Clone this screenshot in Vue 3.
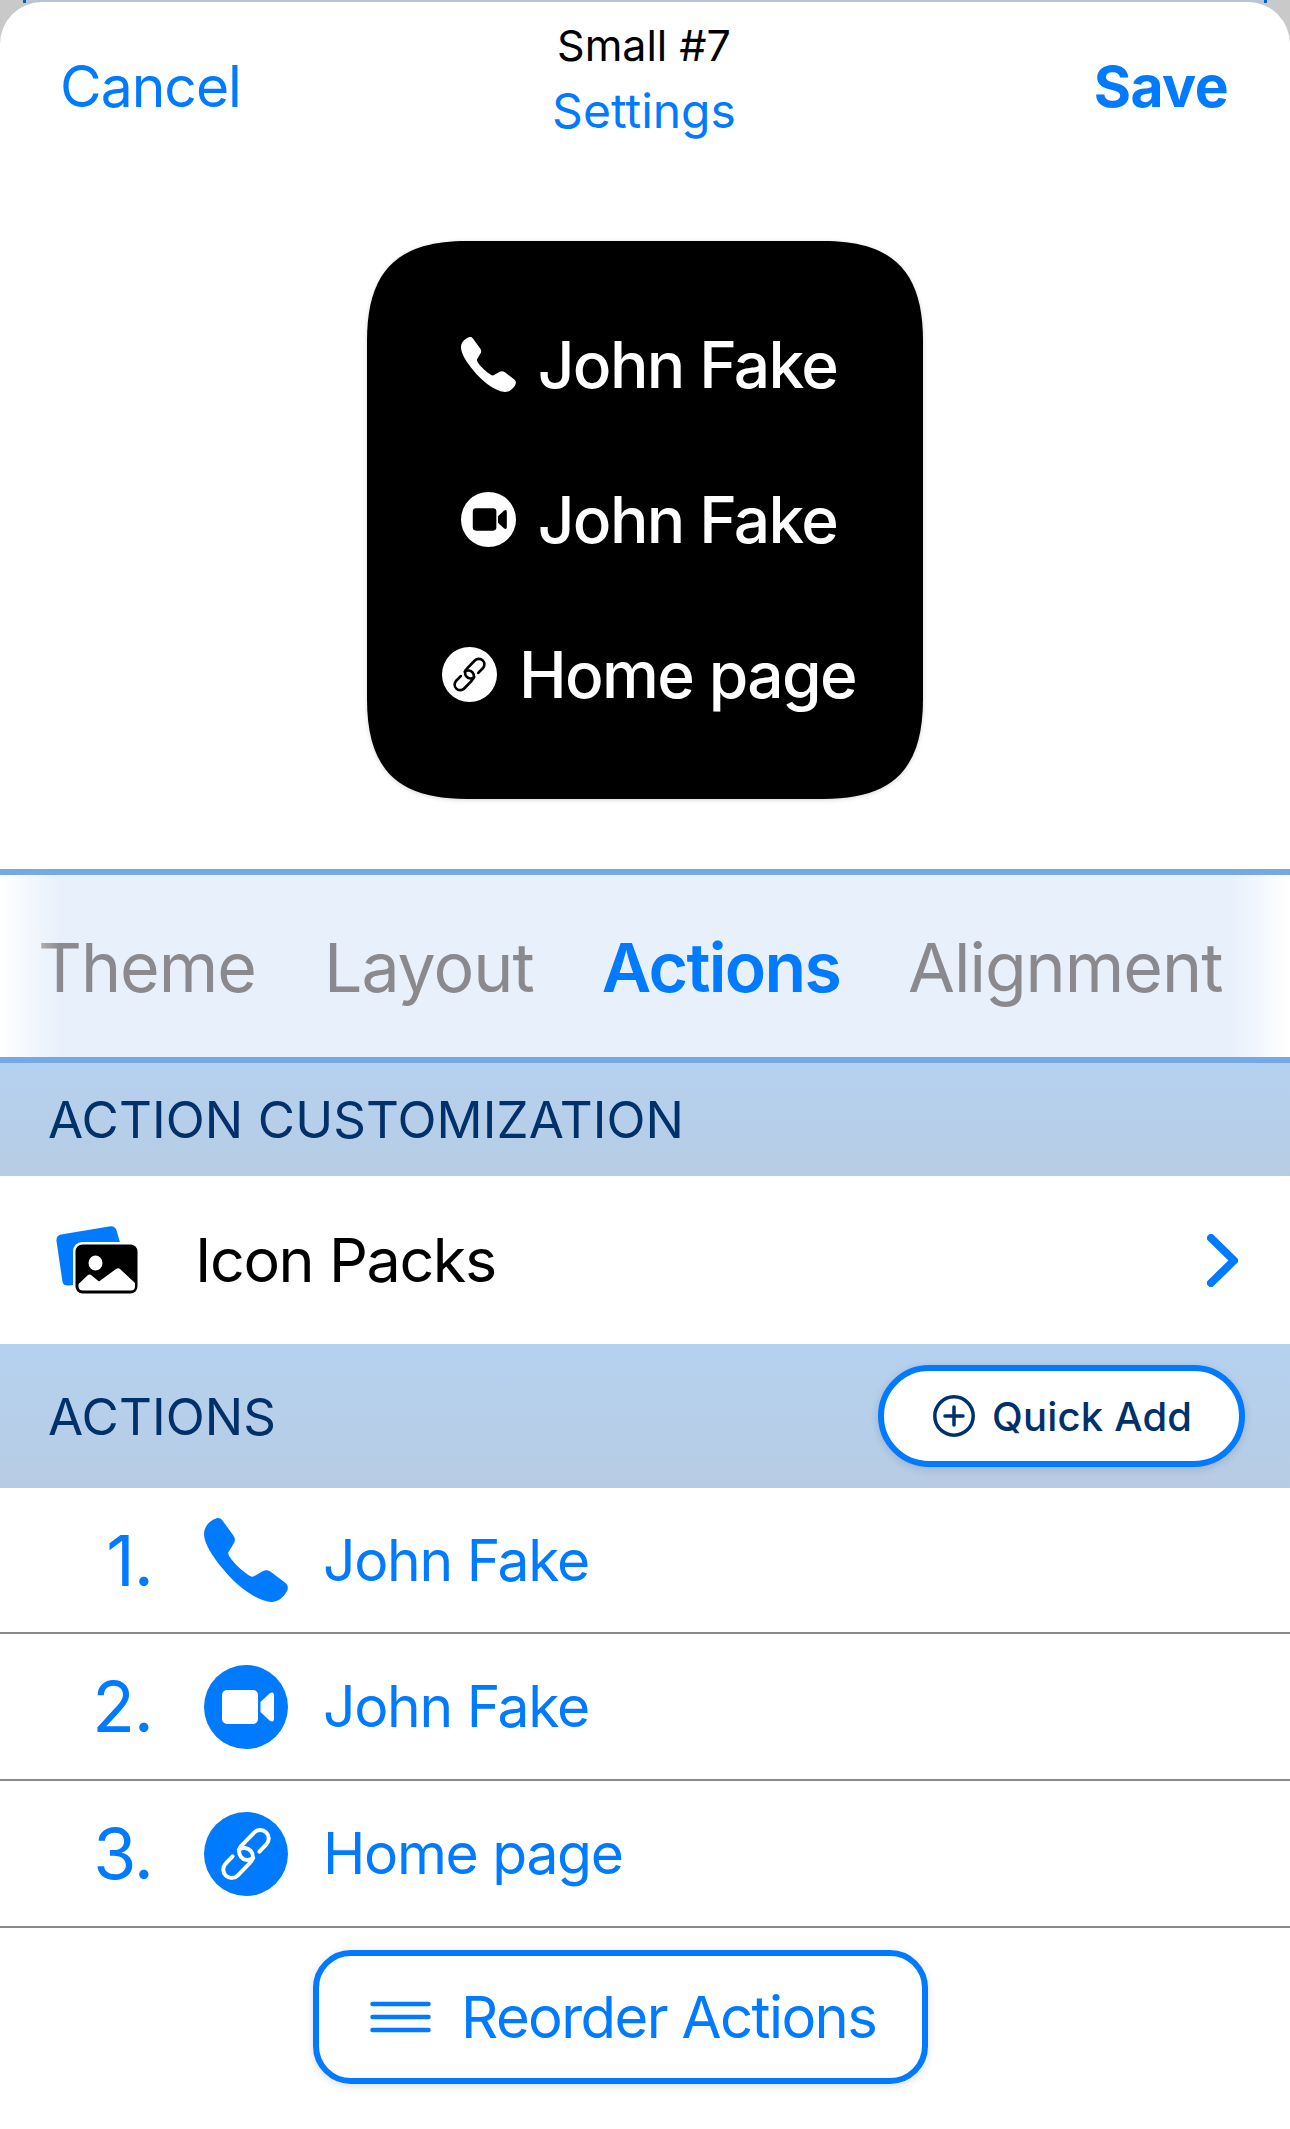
<script setup>
import { h } from 'vue';

const PHONE = 'M12 .5C15-.5 17 .5 18.5 2.5L29 17C31 19.5 31.5 22 30 25L24.5 34C24 35.5 24.5 37 25.5 38.5C30 45.5 38 53 46 58C47.5 59 49 59 50.5 58L59 53C61.5 51.5 64.5 52 67 54L81.5 65C84 67 84.5 70 83 73C79 80 74 84 67 84C50 82 31 66 19 51C8 38 0 25 0 16C0 9 5 3 12 .5Z';

// same glyphs are used in the widget preview and the list below
const ActionIcon = (props) => {
    const inner = props.inner;
    let parts;
    if (props.kind === 'phone') {
        parts = [h('path', { d: PHONE, fill: 'currentColor' })];
    } else if (props.kind === 'video') {
        parts = [
            h('circle', { cx: 42, cy: 42, r: 42, fill: 'currentColor' }),
            h('rect', { x: 18, y: 25, width: 36, height: 34, rx: 5, fill: inner }),
            h('path', { d: 'M56.5 37L65.5 28.5Q70 25.5 70 31V53Q70 58.500 65.500 55.500L56.500 47Z', fill: inner }),
        ];
    } else {
        parts = [
            h('circle', { cx: 42, cy: 42, r: 42, fill: 'currentColor' }),
            h('g', { transform: 'rotate(-46 42 42)', fill: 'none', stroke: inner, 'stroke-width': 4, 'stroke-linecap': 'round' }, [
                h('path', { d: 'M31 34H21A8.500 8.500 0 0 0 21 51H38A8.500 8.500 0 0 0 40 34' }),
                h('path', { d: 'M53 50H63A8.500 8.500 0 0 0 63 33H46A8.500 8.500 0 0 0 44 50' }),
            ]),
        ];
    }
    return h('svg', { viewBox: '0 0 84 84', width: props.size, height: props.size }, parts);
};
ActionIcon.props = ['kind', 'inner', 'size'];

const tabs = [
    { label: 'Theme' },
    { label: 'Layout' },
    { label: 'Actions', active: true },
    { label: 'Alignment' },
];

const actions = [
    { kind: 'phone', label: 'John Fake' },
    { kind: 'video', label: 'John Fake' },
    { kind: 'link', label: 'Home page' },
];
</script>

<template>
    <div class="screen">
        <div class="sheet">
            <header class="nav">
                <span class="nav-btn">Cancel</span>
                <div class="nav-title">
                    <span class="title-top">Small #7</span>
                    <span class="title-sub">Settings</span>
                </div>
                <span class="nav-btn save">Save</span>
            </header>

            <div class="preview">
                <div class="widget">
                    <div v-for="(action, i) in actions" :key="i" class="widget-row">
                        <ActionIcon :kind="action.kind" inner="#000" :size="55" />
                        <span>{{ action.label }}</span>
                    </div>
                </div>
            </div>

            <nav class="tabs">
                <span v-for="tab in tabs" :key="tab.label" class="tab" :class="{ active: tab.active }">{{ tab.label }}</span>
            </nav>

            <div class="section-head first">ACTION CUSTOMIZATION</div>
            <div class="pack-row">
                <svg class="pack-icon" viewBox="0 0 82 68" width="82" height="68">
                    <path d="M5 8.500L53 .5Q60-.5 61 6L65 20L20 58Q8 62 6.500 56L.5 15Q0 9.500 5 8.500Z" fill="#007aff" />
                    <rect x="17" y="16" width="65" height="52" rx="9" fill="#fff" />
                    <rect x="19.500" y="18.500" width="62" height="49" rx="7" fill="#000" />
                    <ellipse cx="39.500" cy="37" rx="7" ry="7.500" fill="#fff" />
                    <path d="M22.500 58L32 49Q33.500 48 35 49L43 55.500L60 43Q62 41.500 64 43L79 57V60Q79 64.500 75 64.500H27Q22.500 64.500 22.500 60Z" fill="#fff" />
                </svg>
                <span class="pack-label">Icon Packs</span>
                <svg class="chevron" viewBox="0 0 31 53" width="31" height="53" fill="none" stroke="#007aff" stroke-width="8" stroke-linecap="round" stroke-linejoin="round">
                    <path d="M4 4L27 26.500L4 49" />
                </svg>
            </div>

            <div class="section-head with-btn">
                <span>ACTIONS</span>
                <button class="quick-add">
                    <svg viewBox="0 0 42 42" width="42" height="42" fill="none" stroke="#00316b" stroke-width="3.500" stroke-linecap="round">
                        <circle cx="21" cy="21" r="19.200" />
                        <path d="M21 12V30M12 21H30" />
                    </svg>
                    Quick Add
                </button>
            </div>

            <div v-for="(action, i) in actions" :key="'row' + i" class="action-row">
                <span class="num">{{ i + 1 }}.</span>
                <ActionIcon :kind="action.kind" inner="#fff" :size="84" />
                <span class="action-label">{{ action.label }}</span>
            </div>

            <div class="footer">
                <button class="reorder">
                    <svg viewBox="0 0 61 32" width="61" height="32" stroke="#007aff" stroke-width="4.500" stroke-linecap="round">
                        <path d="M2.500 3H58.500M2.500 16H58.500M2.500 29H58.500" />
                    </svg>
                    Reorder Actions
                </button>
            </div>
        </div>
    </div>
</template>

<style>
body {
    margin: 0;
    background: #fff;
}
</style>

<style scoped>
.screen {
    width: 1290px;
    height: 2129px;
    padding-top: 2px;
    box-sizing: border-box;
    overflow: hidden;
    font-family: Inter, "Liberation Sans", sans-serif;
    background:
        linear-gradient(90deg, #c9c9c9 23px, #0a5ec2 23px, #0a5ec2 26px, #b9c5d3 26px, #b9c5d3 1264px, #0a5ec2 1264px, #0a5ec2 1267px, #c9c9c9 1267px) top / 100% 3px no-repeat,
        #c9c9c9;
}
.sheet {
    height: 2127px;
    background: #fff;
    border-radius: 42px 42px 0 0;
}
.nav {
    height: 148px;
    padding: 0 62px 0 60px;
    display: flex;
    justify-content: space-between;
    align-items: flex-start;
    position: relative;
}
.nav-btn {
    margin-top: 52px;
    font-size: 57px;
    line-height: 66px;
    letter-spacing: -1px;
    color: #007aff;
}
.save {
    font-weight: 700;
    letter-spacing: -0.6px;
}
.nav-title {
    position: absolute;
    left: 0;
    right: 0;
    top: 16px;
    display: flex;
    flex-direction: column;
    align-items: center;
}
.title-top {
    margin-right: 2px;
    font-size: 43px;
    line-height: 54px;
    color: #000;
}
.title-sub {
    margin-top: 10px;
    margin-right: 2px;
    font-size: 48px;
    line-height: 58px;
    color: #007aff;
}
.preview {
    height: 719px;
    padding-top: 91px;
    box-sizing: border-box;
    display: flex;
    justify-content: center;
    filter: drop-shadow(0 1px 2px rgba(0, 0, 0, 0.16));
}
.widget {
    width: 556px;
    height: 558px;
    padding-left: 8px;
    padding-bottom: 2px;
    box-sizing: border-box;
    background: #000;
    clip-path: path("M0 100C0 30 30 0 100 0H456C526 0 556 30 556 100V458C556 528 526 558 456 558H100C30 558 0 528 0 458Z");
    display: flex;
    flex-direction: column;
    align-items: center;
    justify-content: center;
    gap: 100px;
}
.widget-row {
    display: flex;
    align-items: center;
    gap: 22px;
    height: 55px;
    font-size: 64px;
    font-weight: 500;
    letter-spacing: -1.6px;
    color: #fff;
}
.tabs {
    height: 194px;
    box-sizing: border-box;
    padding: 2px 0 0 38px;
    display: flex;
    align-items: center;
    gap: 68px;
    border-top: 6px solid #74a9e6;
    border-bottom: 6px solid #74a9e6;
    background: #e8f0fb;
    position: relative;
}
.tabs::before,
.tabs::after {
    content: "";
    position: absolute;
    top: 0;
    bottom: 0;
    width: 60px;
}
.tabs::before {
    left: 0;
    background: linear-gradient(90deg, #fff, rgba(255, 255, 255, 0));
}
.tabs::after {
    right: 0;
    background: linear-gradient(270deg, #fff, rgba(255, 255, 255, 0));
}
.tab {
    font-size: 68px;
    letter-spacing: -1px;
    font-weight: 400;
    color: #8a8a8e;
}
.tab.active {
    font-weight: 600;
    letter-spacing: -1.7px;
    color: #007aff;
}
.section-head {
    padding-left: 48px;
    box-sizing: border-box;
    display: flex;
    align-items: center;
    font-size: 51px;
    letter-spacing: 0.1px;
    color: #00316b;
    background: linear-gradient(180deg, #b5d1ef, #b7cce4);
}
.first {
    height: 113px;
}
.with-btn {
    height: 144px;
    justify-content: space-between;
    padding-right: 45px;
}
.pack-row {
    height: 168px;
    padding: 0 52px 0 56px;
    display: flex;
    align-items: center;
}
.pack-label {
    margin-left: 57px;
    flex: 1;
    font-size: 61px;
    letter-spacing: -1.4px;
    color: #000;
}
.quick-add {
    width: 367px;
    height: 102px;
    padding: 0 0 0 49px;
    box-sizing: border-box;
    display: flex;
    align-items: center;
    gap: 17px;
    border: 6px solid #007aff;
    border-radius: 51px;
    background: #fff;
    font-family: inherit;
    font-size: 40px;
    font-weight: 500;
    letter-spacing: 0.2px;
    color: #00316b;
    box-shadow: 0 2px 8px rgba(0, 0, 0, 0.14);
}
.action-row {
    height: 147px;
    box-sizing: border-box;
    display: flex;
    align-items: center;
    border-bottom: 2px solid #8a8a8e;
    color: #007aff;
}
.with-btn + .action-row {
    height: 146px;
}
.num {
    width: 153px;
    text-align: right;
    font-size: 70px;
    letter-spacing: -1px;
}
.action-row svg {
    margin-left: 51px;
    flex: none;
}
.action-label {
    margin-left: 35px;
    font-size: 57px;
    letter-spacing: -1.3px;
}
.footer {
    padding: 22px 0 0 313px;
}
.reorder {
    width: 615px;
    height: 134px;
    padding: 0 0 0 51px;
    box-sizing: border-box;
    display: flex;
    align-items: center;
    gap: 30px;
    border: 6px solid #007aff;
    border-radius: 38px;
    background: #fff;
    font-family: inherit;
    font-size: 58px;
    letter-spacing: -1.6px;
    color: #007aff;
    box-shadow: 0 2px 8px rgba(0, 0, 0, 0.14);
}
</style>
